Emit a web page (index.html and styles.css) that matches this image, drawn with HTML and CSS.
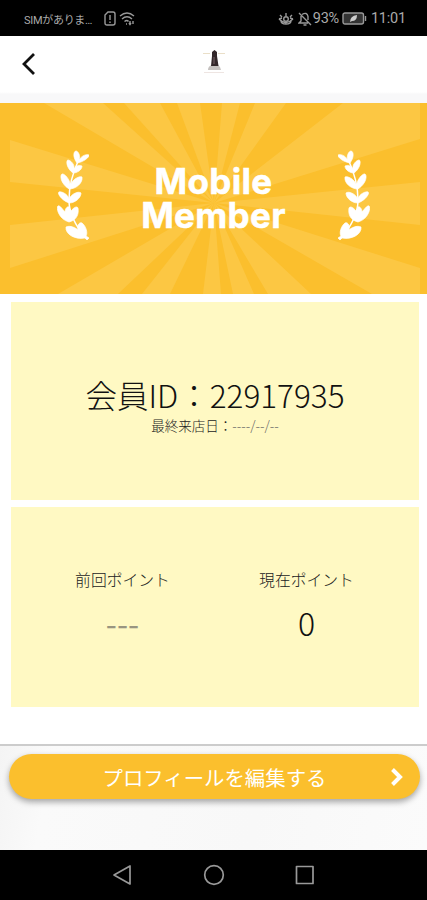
FILE: index.html
```html
<!DOCTYPE html>
<html lang="ja">
<head>
    <meta charset="UTF-8">
    <meta name="viewport" content="width=device-width, initial-scale=1">
    <title>Mobile Member</title>
    <link rel="stylesheet" href="styles.css">
</head>
<body>
    <div class="status-bar">
        <span class="carrier">SIMがありま…</span>
        <svg class="sim-icon" width="12" height="15" viewBox="0 0 12 15">
            <path d="M4 1h5q2 0 2 2v9q0 2-2 2H3q-2 0-2-2V4z"/>
            <path d="M6 4v5M6 10.5v1.5"/>
        </svg>
        <svg class="wifi-icon" width="16" height="15" viewBox="0 0 16 15">
            <path d="M1 5q7-6 14 0M3 8q5-4.500 10 0M5.500 10.500q2.500-2 4 0M7 13h1"/>
            <path d="M11 10v3m-1-1 1 1.500 1-1.500M14 13v-3"/>
        </svg>
        <div class="status-right">
            <svg width="16" height="14" viewBox="0 0 16 14">
                <path d="M1 7q7 7 14 0M2 3l2 2M8 1v3M14 3l-2 2M1 7l3-1M15 7l-3-1M3 9q0 3 5 3t5-3"/>
                <circle cx="8" cy="7" r="2.300"/>
            </svg>
            <svg class="bell-icon" width="14" height="14" viewBox="0 0 14 14">
                <path d="M1 1l12 12M3 4v5l-2 2h9M4 2.500q5-3 6 2V8M5.500 13h3"/>
            </svg>
            <span class="battery-text">93%</span>
            <svg class="battery-icon" width="25" height="13" viewBox="0 0 25 13">
                <rect class="battery-body" x="1" y="1" width="20.500" height="11" rx="2"/>
                <path d="M23.500 4v5"/>
                <path class="leaf" d="M8 10q0-6 7-7 0 6-5 6z"/>
            </svg>
            <span class="clock">11:01</span>
        </div>
    </div>

    <header class="header">
        <svg class="back" width="16" height="26" viewBox="0 0 16 26">
            <path d="M14 3 4 13l10 10"/>
        </svg>
        <svg class="logo" width="24" height="28" viewBox="0 0 24 28">
            <path class="logo-beam" d="M1 5.500h7M16 5.500h7"/>
            <path class="logo-line" d="M2 24.500h20"/>
            <path class="logo-base" d="M6 22q0-4 4-5h6q3 2 3 5z"/>
            <path class="logo-tower" d="M10 4l2.500-2L15 4v4l1.500 10H9L10 8z"/>
            <path class="logo-light" d="M11.500 9h1v7h-1z"/>
        </svg>
    </header>

    <section class="banner">
        <svg class="rays" width="410" height="191" viewBox="10 0 410 191">
            <path d="M214 100 10 37V79zM214 100 10 122V165zM214 100 44 0H103zM214 100 124 0H160zM214 100 177 0H200z"/>
            <path d="M214 100 222 0H240zM214 100 255 0H286zM214 100 343 0H420V36zM214 100 420 79V122z"/>
            <path d="M214 100 420 165V191H372zM214 100 268 191H311zM214 100 233 191H254zM214 100 203 191H221z"/>
            <path d="M214 100 170 191H142zM214 100 118 191H58z"/>
        </svg>
        <div class="banner-content">
            <svg class="laurel" width="32" height="90" viewBox="0 0 32 90">
                <path class="stem" d="M22 9C15 24 12 40 12 50s3 22 17 38"/>
                <path d="M20 13C15 6 17 1 19 1s5 5 3 9c3-5 8-6 10-5 0 3-6 7-12 8z"/>
                <path d="M16 23C9 18 9 10 11 10s7 4 6 9c2-4 6-4 8-3 0 4-5 7-9 7z"/>
                <path d="M12 39C3 33 3 25 5 24s9 6 8 12c3-8 10-10 12-9 1 6-6 12-13 12z"/>
                <path d="M12 53C4 50 0 43 2 42s9 2 10 7c3-6 10-8 12-6 0 5-6 10-12 10z"/>
                <path d="M12 72C1 69-1 57 1 56s5 4 7 6c0-4 3-6 4-5l2 4c3-4 6-5 7-3 1 6-1 12-9 14z"/>
                <path d="M28 88C18 90 8 84 9 77c4-2 10 1 12 3-1-6 2-8 4-7 4 3 6 10 4 13l3 2-2 2z"/>
            </svg>
            <h1 class="banner-title">Mobile<br>Member</h1>
            <svg class="laurel laurel-right" width="32" height="90" viewBox="0 0 32 90">
                <path class="stem" d="M22 9C15 24 12 40 12 50s3 22 17 38"/>
                <path d="M20 13C15 6 17 1 19 1s5 5 3 9c3-5 8-6 10-5 0 3-6 7-12 8z"/>
                <path d="M16 23C9 18 9 10 11 10s7 4 6 9c2-4 6-4 8-3 0 4-5 7-9 7z"/>
                <path d="M12 39C3 33 3 25 5 24s9 6 8 12c3-8 10-10 12-9 1 6-6 12-13 12z"/>
                <path d="M12 53C4 50 0 43 2 42s9 2 10 7c3-6 10-8 12-6 0 5-6 10-12 10z"/>
                <path d="M12 72C1 69-1 57 1 56s5 4 7 6c0-4 3-6 4-5l2 4c3-4 6-5 7-3 1 6-1 12-9 14z"/>
                <path d="M28 88C18 90 8 84 9 77c4-2 10 1 12 3-1-6 2-8 4-7 4 3 6 10 4 13l3 2-2 2z"/>
            </svg>
        </div>
    </section>

    <main class="cards">
        <section class="card member-card">
            <div class="member-id">会員ID：22917935</div>
            <div class="last-visit">最終来店日：<span>----/--/--</span></div>
        </section>
        <section class="card points-card">
            <div class="point">
                <div class="point-label">前回ポイント</div>
                <div class="point-value point-empty">---</div>
            </div>
            <div class="point">
                <div class="point-label">現在ポイント</div>
                <div class="point-value">0</div>
            </div>
        </section>
    </main>

    <footer class="footer">
        <button class="edit-button">
            <span class="edit-label">プロフィールを編集する</span>
            <svg class="chevron" width="14" height="20" viewBox="0 0 14 20">
                <path d="M2.500 2.500 10 10l-7.500 7.500"/>
            </svg>
        </button>
    </footer>

    <nav class="nav-bar">
        <svg width="22" height="22" viewBox="0 0 22 22"><path d="M18 2v18L2 11z"/></svg>
        <svg width="22" height="22" viewBox="0 0 22 22"><circle cx="11" cy="11" r="9.300"/></svg>
        <svg width="22" height="22" viewBox="0 0 22 22"><path d="M2.500 2.500H19v17H2.500z"/></svg>
    </nav>
</body>
</html>
```

FILE: styles.css
```css
* {
    box-sizing: border-box;
}
body {
    margin: 0;
    width: 427px;
    height: 900px;
    display: flex;
    flex-direction: column;
    overflow: hidden;
    background-color: #fff;
    color: #222;
    font-family: "Noto Sans CJK JP", sans-serif;
}
svg {
    flex: none;
    fill: none;
}
.status-bar {
    height: 36px;
    flex: none;
    display: flex;
    align-items: center;
    padding: 1px 21px 0 24px;
    background-color: #000;
    color: #aaa;
    font-family: Roboto, "Noto Sans CJK JP", sans-serif;
}
.status-bar svg {
    stroke: #999;
    stroke-width: 1.4;
}
.carrier {
    width: 69px;
    font-size: 11px;
    letter-spacing: -0.3px;
    white-space: nowrap;
}
.sim-icon {
    margin-left: 11px;
}
.wifi-icon {
    margin-left: 3px;
}
.status-right {
    display: flex;
    align-items: center;
    margin-left: auto;
}
.bell-icon {
    margin-left: 4px;
}
.battery-text {
    margin-left: 1px;
    font-size: 14.5px;
    letter-spacing: -0.3px;
}
.battery-icon {
    margin-left: 3px;
}
.status-bar .battery-body {
    fill: #333;
}
.status-bar .leaf {
    fill: #ccc;
    stroke: none;
}
.clock {
    margin-left: 4px;
    font-size: 14.5px;
    letter-spacing: -0.2px;
}
.header {
    height: 67px;
    flex: none;
    display: flex;
    align-items: flex-start;
    padding: 15px 20px 0;
    background: linear-gradient(#fff 56px, #f8f8f9 58px);
}
.back {
    stroke: #111;
    stroke-width: 2.8;
}
.logo {
    margin: -3px 0 0 166px;
}
.logo-beam {
    stroke: #eadfc8;
}
.logo-line {
    stroke: #eee5e2;
}
.logo-base {
    fill: #c5c1bf;
}
.logo-tower {
    fill: #33272a;
}
.logo-light {
    fill: #786468;
}
.banner {
    height: 191px;
    flex: none;
    display: grid;
    justify-items: center;
    background-color: #fbbf2d;
}
.banner > * {
    grid-area: 1 / 1;
}
.rays {
    fill: #fcc743;
    margin-left: 3px;
}
.banner-content {
    width: 313px;
    display: flex;
    align-items: center;
    justify-content: space-between;
    padding-bottom: 7px;
}
.laurel {
    fill: #fff;
    stroke: #fff;
    stroke-width: 0.7;
}
.laurel-right {
    transform: scaleX(-1);
}
.stem {
    fill: none;
    stroke-width: 1.5;
}
.banner-title {
    margin: 6px 0 0;
    color: #fff;
    font-family: Inter, sans-serif;
    font-size: 35px;
    font-weight: 700;
    line-height: 34px;
    letter-spacing: 0.35px;
    text-align: center;
    -webkit-text-stroke: 0.5px #fff;
}
.cards {
    height: 450px;
    flex: none;
    display: flex;
    flex-direction: column;
    gap: 7px;
    padding: 8px 8px 0 11px;
}
.card {
    background-color: #fff9c3;
}
.member-card {
    height: 198px;
    padding-top: 69px;
    text-align: center;
}
.member-id {
    font-size: 31.5px;
    font-weight: 300;
    line-height: 46px;
    color: #111;
}
.last-visit {
    font-size: 13.5px;
    font-weight: 300;
    line-height: 16px;
}
.last-visit span {
    color: #666;
}
.points-card {
    height: 200px;
    display: grid;
    grid-template-columns: 184px 184px;
    justify-content: center;
    padding: 61px 1px 0 0;
    text-align: center;
}
.point-label {
    font-size: 15.8px;
    font-weight: 300;
    line-height: 24px;
}
.point-value {
    margin-top: 7px;
    font-size: 32px;
    font-weight: 300;
    line-height: 46px;
    color: #111;
}
.point-empty {
    color: #999580;
    font-weight: 400;
}
.footer {
    height: 106px;
    flex: none;
    padding: 8px 7px 0 9px;
    border-top: 2px solid #ccc;
    background: linear-gradient(100deg, #f4f4f4, #fafafa 12%, #f8f8f8 60%, #fbfbfb);
}
.edit-button {
    width: 100%;
    height: 45px;
    display: flex;
    align-items: center;
    padding: 0 16px 0 30px;
    border: none;
    border-radius: 23px;
    background-color: #fbbf2d;
    box-shadow: 0 3px 6px rgba(0, 0, 0, 0.35);
    color: #fff;
    font-family: inherit;
}
.edit-label {
    flex: 1;
    font-size: 20.4px;
    line-height: 30px;
}
.chevron {
    stroke: #fff;
    stroke-width: 4;
}
.nav-bar {
    height: 50px;
    flex: none;
    display: flex;
    align-items: center;
    justify-content: center;
    gap: 69px;
    background-color: #000;
}
.nav-bar svg {
    stroke: #999;
    stroke-width: 1.7;
    stroke-linejoin: round;
}
```
